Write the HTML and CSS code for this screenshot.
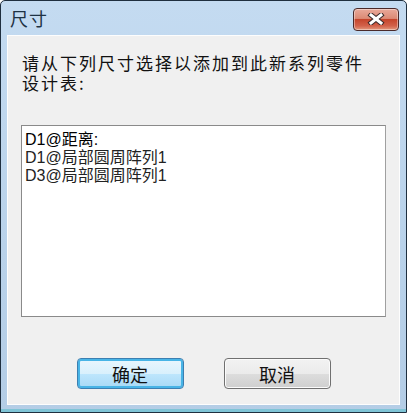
FILE: index.html
```html
<!DOCTYPE html>
<html lang="zh-CN">
<head>
<meta charset="UTF-8">
<title>尺寸</title>
<link rel="stylesheet" href="styles.css">
</head>
<body>

<div class="window">
  <div class="titlebar">
    <span class="title">尺寸</span>
    <button class="close" aria-label="关闭">
      <svg width="18" height="12" viewBox="0 0 18 12">
        <path d="M4 2 L14 10 M14 2 L4 10" stroke="#3a2a2a" stroke-width="5" stroke-linecap="square"/>
        <path d="M4 2 L14 10 M14 2 L4 10" stroke="#fff" stroke-width="3" stroke-linecap="square"/>
      </svg>
    </button>
  </div>

  <div class="client">
    <p class="prompt">
      <span class="line">请从下列尺寸选择以添加到此新系列零件</span>
      <span class="line">设计表:</span>
    </p>

    <div class="listbox">
      <div class="item current">D1@距离:</div>
      <div class="item">D1@局部圆周阵列1</div>
      <div class="item">D3@局部圆周阵列1</div>
    </div>

    <div class="buttons">
      <button class="btn default">确定</button>
      <button class="btn">取消</button>
    </div>
  </div>
</div>

</body>
</html>
```

FILE: styles.css
```css
html, body {
  margin: 0;
  padding: 0;
  background: #fff;
}

body {
  font-family: "Noto Sans CJK SC", "Liberation Sans", sans-serif;
  color: #000;
}

.window {
  box-sizing: border-box;
  width: 407px;
  height: 413px;
  display: flex;
  flex-direction: column;
  border: 1px solid #1f2f3f;
  border-radius: 5px 5px 0 0;
  background: linear-gradient(to bottom, #c4dbf1 0%, #b9d2ea 60%, #b4cde6 100%);
  box-shadow: inset 0 -3px 0 #7fc4d6;
}

.titlebar {
  height: 34px;
  display: flex;
  align-items: center;
  justify-content: space-between;
  padding: 0 7px 0 9px;
}

.title {
  font-size: 18px;
  color: #1e3244;
  letter-spacing: 1px;
}

.close {
  width: 46px;
  height: 23px;
  margin-top: 2px;
  padding: 0;
  border: 1px solid #4a2a2a;
  border-radius: 4px;
  background: linear-gradient(to bottom, #e9a99a 0%, #dc8a75 45%, #c5452c 50%, #d2614a 80%, #e39a7e 100%);
  box-shadow: inset 0 0 0 1px rgba(255,255,255,0.4);
  display: flex;
  align-items: center;
  justify-content: center;
}

.client {
  flex: 1;
  margin: 0 6px 7px 6px;
  background: #f0f0f0;
  border: 1px solid #fdfdfd;
  padding: 0 13px;
  display: flex;
  flex-direction: column;
}

.prompt {
  margin: 17px 0 0 1px;
  font-size: 17px;
  letter-spacing: 2px;
  color: #111;
}

.prompt .line {
  display: block;
  height: 20px;
  line-height: 20px;
}

.listbox {
  margin-top: 32px;
  height: 178px;
  background: #fff;
  border: 1px solid #8a8a8a;
  border-right-color: #a0a0a0;
  padding: 5px 3px 7px;
  font-family: "Liberation Sans", "Noto Sans CJK SC", sans-serif;
  font-size: 16px;
  line-height: 18px;
  color: #222;
}

.item.current {
  color: #000;
}

.buttons {
  margin-top: 41px;
  display: flex;
  justify-content: center;
  gap: 40px;
}

.btn {
  width: 107px;
  height: 31px;
  padding: 0;
  font-family: "Noto Sans CJK SC", sans-serif;
  font-size: 18px;
  color: #111;
  border: 1px solid #707070;
  border-radius: 4px;
  background: linear-gradient(to bottom, #f2f2f2 0%, #ebebeb 50%, #dddddd 51%, #cfcfcf 100%);
  box-shadow: inset 0 0 0 1px #fbfbfb;
}

.btn.default {
  border-color: #3c7fb1;
  background: linear-gradient(to bottom, #eaf6fd 0%, #d9f0fc 50%, #bee6fd 51%, #a7d9f5 100%);
  box-shadow: inset 0 0 0 2px #48b4e6;
}
```
